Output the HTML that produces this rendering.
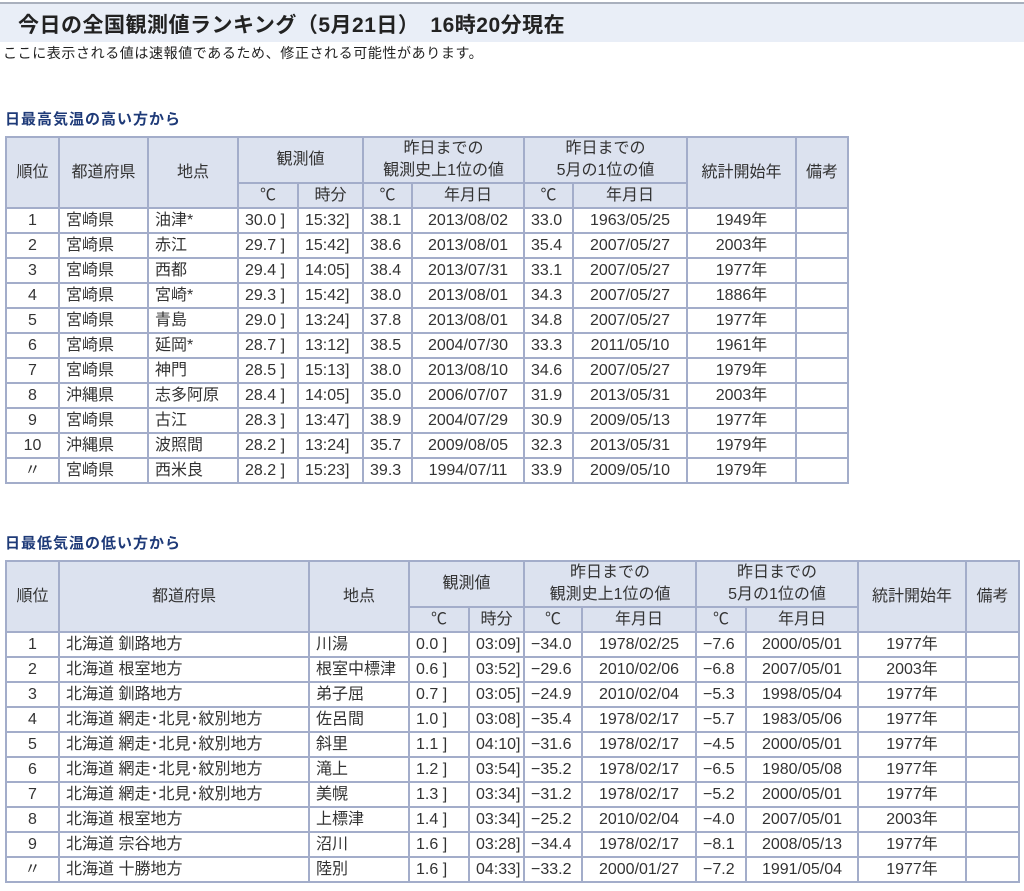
<!DOCTYPE html>
<html><head><meta charset="utf-8">
<style>
body{margin:0;background:#fff;font-family:"Liberation Sans","Noto Sans CJK JP",sans-serif;color:#222;width:1024px;height:891px;overflow:hidden;position:relative}
.title{position:absolute;left:0;top:2px;width:1024px;height:40px;background:#e9eef7;border-top:2px solid #a9b0bd;box-sizing:border-box}
.title span{position:absolute;left:18px;top:5px;font-size:21px;font-weight:bold;color:#222;letter-spacing:0.5px}
.sub{position:absolute;left:3px;top:43px;font-size:14px;color:#222;letter-spacing:0.6px}
.h{position:absolute;left:5px;font-size:15px;font-weight:bold;color:#1e3a78;letter-spacing:1px}
table{position:absolute;left:5px;border-collapse:collapse;table-layout:fixed;font-size:16px}
td,th{border:2px solid #a3adca;padding:0 0 0 6px;white-space:nowrap;overflow:hidden;font-weight:normal;text-align:left;height:23px;line-height:22px;color:#333}
th{background:#dce2ef;text-align:center;padding:0}
th.t{height:44px;line-height:22px}
.c{text-align:center;padding:0}
</style></head><body>
<div class="title"><span>今日の全国観測値ランキング（5月21日）　16時20分現在</span></div>
<div class="sub">ここに表示される値は速報値であるため、修正される可能性があります。</div>
<div class="h" style="top:108px">日最高気温の高い方から</div>
<table style="top:136px;width:842px">
<colgroup><col style="width:53px"><col style="width:89px"><col style="width:90px"><col style="width:60px"><col style="width:65px"><col style="width:49px"><col style="width:112px"><col style="width:49px"><col style="width:114px"><col style="width:109px"><col style="width:52px"></colgroup>
<tr><th rowspan="2">順位</th><th rowspan="2">都道府県</th><th rowspan="2">地点</th><th colspan="2" class="t">観測値</th><th colspan="2" class="t">昨日までの<br>観測史上1位の値</th><th colspan="2" class="t">昨日までの<br>5月の1位の値</th><th rowspan="2">統計開始年</th><th rowspan="2">備考</th></tr>
<tr><th>℃</th><th>時分</th><th>℃</th><th>年月日</th><th>℃</th><th>年月日</th></tr>
<tr><td class="c">1</td><td>宮崎県</td><td>油津*</td><td>30.0 ]</td><td>15:32]</td><td>38.1</td><td class="c">2013/08/02</td><td>33.0</td><td class="c">1963/05/25</td><td class="c">1949年</td><td></td></tr>
<tr><td class="c">2</td><td>宮崎県</td><td>赤江</td><td>29.7 ]</td><td>15:42]</td><td>38.6</td><td class="c">2013/08/01</td><td>35.4</td><td class="c">2007/05/27</td><td class="c">2003年</td><td></td></tr>
<tr><td class="c">3</td><td>宮崎県</td><td>西都</td><td>29.4 ]</td><td>14:05]</td><td>38.4</td><td class="c">2013/07/31</td><td>33.1</td><td class="c">2007/05/27</td><td class="c">1977年</td><td></td></tr>
<tr><td class="c">4</td><td>宮崎県</td><td>宮崎*</td><td>29.3 ]</td><td>15:42]</td><td>38.0</td><td class="c">2013/08/01</td><td>34.3</td><td class="c">2007/05/27</td><td class="c">1886年</td><td></td></tr>
<tr><td class="c">5</td><td>宮崎県</td><td>青島</td><td>29.0 ]</td><td>13:24]</td><td>37.8</td><td class="c">2013/08/01</td><td>34.8</td><td class="c">2007/05/27</td><td class="c">1977年</td><td></td></tr>
<tr><td class="c">6</td><td>宮崎県</td><td>延岡*</td><td>28.7 ]</td><td>13:12]</td><td>38.5</td><td class="c">2004/07/30</td><td>33.3</td><td class="c">2011/05/10</td><td class="c">1961年</td><td></td></tr>
<tr><td class="c">7</td><td>宮崎県</td><td>神門</td><td>28.5 ]</td><td>15:13]</td><td>38.0</td><td class="c">2013/08/10</td><td>34.6</td><td class="c">2007/05/27</td><td class="c">1979年</td><td></td></tr>
<tr><td class="c">8</td><td>沖縄県</td><td>志多阿原</td><td>28.4 ]</td><td>14:05]</td><td>35.0</td><td class="c">2006/07/07</td><td>31.9</td><td class="c">2013/05/31</td><td class="c">2003年</td><td></td></tr>
<tr><td class="c">9</td><td>宮崎県</td><td>古江</td><td>28.3 ]</td><td>13:47]</td><td>38.9</td><td class="c">2004/07/29</td><td>30.9</td><td class="c">2009/05/13</td><td class="c">1977年</td><td></td></tr>
<tr><td class="c">10</td><td>沖縄県</td><td>波照間</td><td>28.2 ]</td><td>13:24]</td><td>35.7</td><td class="c">2009/08/05</td><td>32.3</td><td class="c">2013/05/31</td><td class="c">1979年</td><td></td></tr>
<tr><td class="c">〃</td><td>宮崎県</td><td>西米良</td><td>28.2 ]</td><td>15:23]</td><td>39.3</td><td class="c">1994/07/11</td><td>33.9</td><td class="c">2009/05/10</td><td class="c">1979年</td><td></td></tr>
</table>
<div class="h" style="top:532px">日最低気温の低い方から</div>
<table style="top:560px;width:1013px">
<colgroup><col style="width:53px"><col style="width:250px"><col style="width:100px"><col style="width:60px"><col style="width:55px"><col style="width:58px"><col style="width:114px"><col style="width:50px"><col style="width:112px"><col style="width:108px"><col style="width:53px"></colgroup>
<tr><th rowspan="2">順位</th><th rowspan="2">都道府県</th><th rowspan="2">地点</th><th colspan="2" class="t">観測値</th><th colspan="2" class="t">昨日までの<br>観測史上1位の値</th><th colspan="2" class="t">昨日までの<br>5月の1位の値</th><th rowspan="2">統計開始年</th><th rowspan="2">備考</th></tr>
<tr><th>℃</th><th>時分</th><th>℃</th><th>年月日</th><th>℃</th><th>年月日</th></tr>
<tr><td class="c">1</td><td>北海道 釧路地方</td><td>川湯</td><td>0.0 ]</td><td>03:09]</td><td>−34.0</td><td class="c">1978/02/25</td><td>−7.6</td><td class="c">2000/05/01</td><td class="c">1977年</td><td></td></tr>
<tr><td class="c">2</td><td>北海道 根室地方</td><td>根室中標津</td><td>0.6 ]</td><td>03:52]</td><td>−29.6</td><td class="c">2010/02/06</td><td>−6.8</td><td class="c">2007/05/01</td><td class="c">2003年</td><td></td></tr>
<tr><td class="c">3</td><td>北海道 釧路地方</td><td>弟子屈</td><td>0.7 ]</td><td>03:05]</td><td>−24.9</td><td class="c">2010/02/04</td><td>−5.3</td><td class="c">1998/05/04</td><td class="c">1977年</td><td></td></tr>
<tr><td class="c">4</td><td>北海道 網走･北見･紋別地方</td><td>佐呂間</td><td>1.0 ]</td><td>03:08]</td><td>−35.4</td><td class="c">1978/02/17</td><td>−5.7</td><td class="c">1983/05/06</td><td class="c">1977年</td><td></td></tr>
<tr><td class="c">5</td><td>北海道 網走･北見･紋別地方</td><td>斜里</td><td>1.1 ]</td><td>04:10]</td><td>−31.6</td><td class="c">1978/02/17</td><td>−4.5</td><td class="c">2000/05/01</td><td class="c">1977年</td><td></td></tr>
<tr><td class="c">6</td><td>北海道 網走･北見･紋別地方</td><td>滝上</td><td>1.2 ]</td><td>03:54]</td><td>−35.2</td><td class="c">1978/02/17</td><td>−6.5</td><td class="c">1980/05/08</td><td class="c">1977年</td><td></td></tr>
<tr><td class="c">7</td><td>北海道 網走･北見･紋別地方</td><td>美幌</td><td>1.3 ]</td><td>03:34]</td><td>−31.2</td><td class="c">1978/02/17</td><td>−5.2</td><td class="c">2000/05/01</td><td class="c">1977年</td><td></td></tr>
<tr><td class="c">8</td><td>北海道 根室地方</td><td>上標津</td><td>1.4 ]</td><td>03:34]</td><td>−25.2</td><td class="c">2010/02/04</td><td>−4.0</td><td class="c">2007/05/01</td><td class="c">2003年</td><td></td></tr>
<tr><td class="c">9</td><td>北海道 宗谷地方</td><td>沼川</td><td>1.6 ]</td><td>03:28]</td><td>−34.4</td><td class="c">1978/02/17</td><td>−8.1</td><td class="c">2008/05/13</td><td class="c">1977年</td><td></td></tr>
<tr><td class="c">〃</td><td>北海道 十勝地方</td><td>陸別</td><td>1.6 ]</td><td>04:33]</td><td>−33.2</td><td class="c">2000/01/27</td><td>−7.2</td><td class="c">1991/05/04</td><td class="c">1977年</td><td></td></tr>
</table>
</body></html>
